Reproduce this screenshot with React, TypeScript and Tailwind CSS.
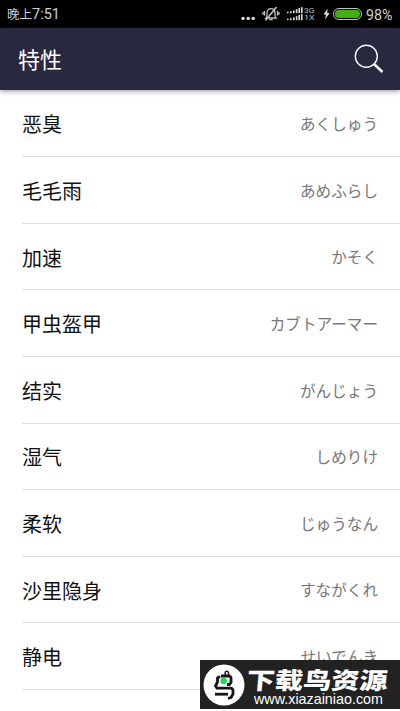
const rows: [string, string][] = [
  ["恶臭", "あくしゅう"],
  ["毛毛雨", "あめふらし"],
  ["加速", "かそく"],
  ["甲虫盔甲", "カブトアーマー"],
  ["结实", "がんじょう"],
  ["湿气", "しめりけ"],
  ["柔软", "じゅうなん"],
  ["沙里隐身", "すながくれ"],
  ["静电", "せいでんき"],
];

function MuteIcon() {
  return (
    <svg width="18" height="16" viewBox="0 0 18 16" fill="none" stroke="#c4c4c4" strokeWidth="1.3">
      <path d="M4 12c1.300-1 1-2 1-4.500C5 4.200 6.500 2.600 9 2.600s4 1.600 4 4.900c0 2.500-.3 3.500 1 4.500H4zM7.300 13.600h3.400" />
      <path d="M2.500 5v4.500M1 6v2.800M15.500 5v4.500M17 6v2.800" />
      <path d="M3.500 14.500L14.500 1" strokeWidth="1.500" />
    </svg>
  );
}

function SignalIcon() {
  const bars = [
    [0, 1.5],
    [3, 2],
    [6, 2.8],
    [8.8, 4],
    [11.400, 5.2],
    [14, 6],
  ];
  return (
    <svg width="16" height="14" viewBox="0 0 16 14" fill="#dedede">
      {bars.map(([x, h]) => (
        <g key={x}>
          <rect x={x} y={6.200 - h} width="1.600" height={h} />
          <rect x={x} y={13.200 - h} width="1.600" height={h} />
        </g>
      ))}
    </svg>
  );
}

function StatusBar() {
  return (
    <div className="flex h-7 shrink-0 items-center bg-black pl-[7px] pr-[7px] text-[#d0d0d0]">
      <span className="pt-px text-[12.500px] leading-[28px] font-['Roboto','Noto_Sans_CJK_SC',sans-serif]">
        晚上<span className="text-[14.500px]">7:51</span>
      </span>
      <svg className="ml-auto" width="14" height="28" viewBox="0 0 14 28" fill="#dedede">
        <circle cx="2" cy="18.400" r="1.700" />
        <circle cx="7.200" cy="18.400" r="1.700" />
        <circle cx="12.200" cy="18.400" r="1.700" />
      </svg>
      <div className="ml-[7px]">
        <MuteIcon />
      </div>
      <div className="ml-[7px]">
        <SignalIcon />
      </div>
      <svg
        className="ml-px block overflow-visible text-[8px] font-['Roboto',sans-serif]"
        width="11"
        height="16"
        viewBox="0 0 11 16"
        fill="#bdbdbd"
      >
        <text x="0" y="6.800" textLength="10.500" lengthAdjust="spacingAndGlyphs">3G</text>
        <text x="0" y="14.200" textLength="10.500" lengthAdjust="spacingAndGlyphs">1X</text>
      </svg>
      <svg className="ml-[8px]" width="7" height="12" viewBox="0 0 7 12" fill="#dedede">
        <path d="M4.500 0.500L0.500 6.500H3L2 11.500L6.700 5H4.200z" />
      </svg>
      <div className="ml-[3px] h-[12px] w-[29px] rounded-full border border-[#b8c8b0] p-px">
        <div className="h-full rounded-full bg-[#45ad12]" />
      </div>
      <span className="ml-[4px] w-[27px] whitespace-nowrap pt-px text-[14.200px] leading-[28px] font-['Roboto',sans-serif]">98%</span>
    </div>
  );
}

function Header() {
  return (
    <header className="flex h-[62px] shrink-0 items-center justify-between bg-[#28293f] pl-[18px] pr-[15px] shadow-[0_1px_5px_rgba(40,41,63,0.5)]">
      <h1 className="pb-[2px] text-[22px] leading-[30px] text-white">特性</h1>
      <svg width="31" height="30" viewBox="0 0 31 30" fill="none" stroke="#f4f5fa">
        <circle cx="12.300" cy="12.300" r="11" strokeWidth="1.400" />
        <path d="M20 20L28.500 28" strokeWidth="2.600" />
      </svg>
    </header>
  );
}

function BirdLogo() {
  return (
    <svg className="shrink-0" width="42" height="42" viewBox="0 0 42 42" fill="none">
      <circle cx="21" cy="21" r="20.500" fill="#fff" />
      <g stroke="#151515" strokeWidth="2.800" strokeLinejoin="round">
        <path d="M22.200 11V8.500C22.200 6.700 25.500 6.700 25.500 9V11" strokeWidth="1.500" />
        <path d="M18 12H26.500L28 13.500V18.500L26.500 20.500H24" />
        <path d="M17 12.500L14.500 14V18L12.500 22L14 24.200H28.500L30 26V30L28 33.500L25 34.500" />
        <path d="M12 30.200H25" />
      </g>
      <circle cx="20.600" cy="17" r="3.300" fill="#24d95b" />
    </svg>
  );
}

function Watermark() {
  return (
    <div className="absolute top-[660px] right-0 flex h-[49px] w-[200px] items-center bg-[#222] pl-[3px] text-white">
      <BirdLogo />
      <svg className="block shrink-0" width="150" height="49" viewBox="0 0 150 49" fill="#fff">
        <g transform="translate(1 28.500) skewX(-5) scale(1 0.820)">
          <text x="0" y="0" fontSize="28.500" fontWeight="900" textLength="141" lengthAdjust="spacingAndGlyphs">
            下载鸟资源
          </text>
        </g>
        <text className="font-['Liberation_Sans',sans-serif]" x="9" y="43.500" fontSize="14.300" textLength="129">
          www.xiazainiao.com
        </text>
      </svg>
    </div>
  );
}

export default function App() {
  return (
    <div className="relative flex h-[711px] w-[400px] flex-col overflow-hidden bg-white font-['Noto_Sans_CJK_SC',sans-serif]">
      <StatusBar />
      <Header />
      <ul className="pt-[0.700px] pl-[22px]">
        {rows.map(([name, kana]) => (
          <li key={name} className="flex h-[66.600px] items-center justify-between border-b border-[#dedede] pr-[22px]">
            <span className="pt-[2px] text-[20px] text-[#111]">{name}</span>
            <span className="pt-px text-[15.600px] text-[#777] font-['Noto_Sans_CJK_JP',sans-serif]">{kana}</span>
          </li>
        ))}
      </ul>
      <Watermark />
    </div>
  );
}
